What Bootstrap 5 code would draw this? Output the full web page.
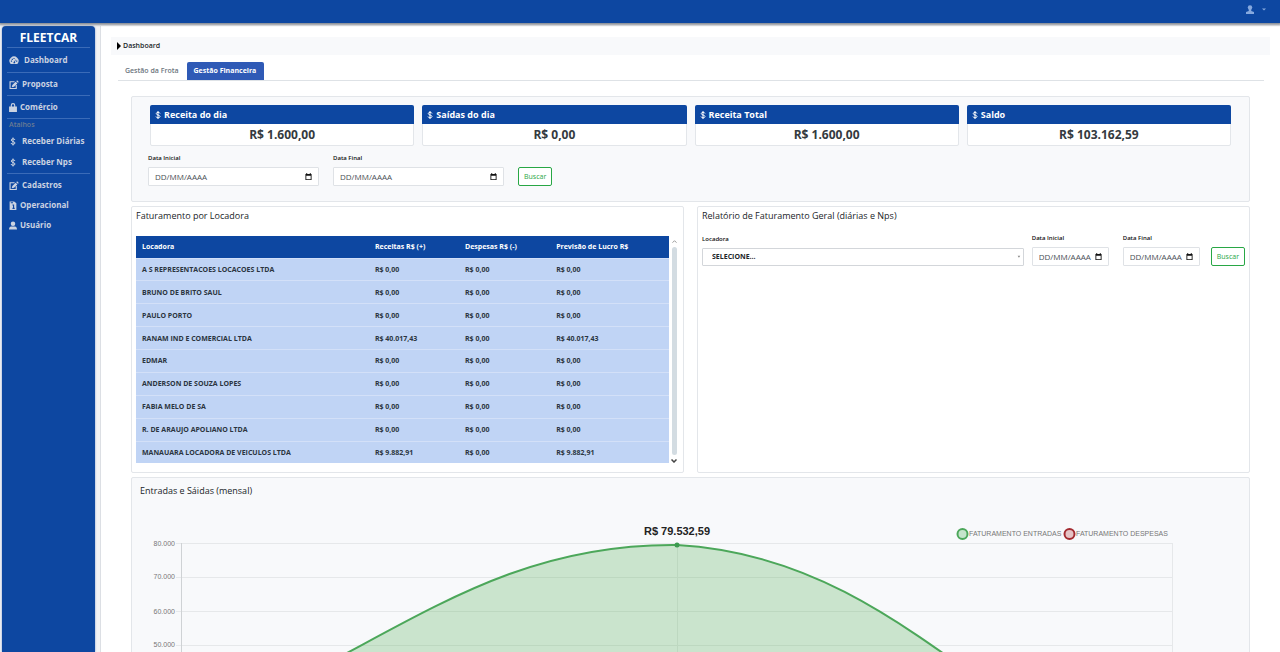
<!DOCTYPE html>
<html lang="pt-BR">
<head>
<meta charset="utf-8">
<meta name="viewport" content="width=device-width, initial-scale=1">
<title>Fleetcar - Dashboard</title>
<link href="https://cdn.jsdelivr.net/npm/bootstrap@5.3.0/dist/css/bootstrap.min.css" rel="stylesheet">
<style>
:root { --blue: #0d47a1; --soft: #f8f9fb; --line: #e3e6ea; }
body { font-family: "Open Sans", "Noto Sans", sans-serif; font-size: 8px; line-height: 12px; color: #212529; background: #f1f2f4; }
.topbar { height: 23px; background: var(--blue); box-shadow: 0 1px 2px 1px #8b8f96; z-index: 2; padding: 0 14px 5px 0; }
.user-btn { color: #86a9de; line-height: 0; }
.side { width: 93px; margin: 3px 5px 0 2px; padding: 4px 5px; background: var(--blue); border-radius: 4px 4px 0 0; box-shadow: 0 0 2px #6f8fc4; }
.brand-name { font-size: 12px; line-height: 16px; }
.side a { color: #cbd3e1; font-size: 8px; font-weight: 700; text-decoration: none; display: flex; align-items: center; gap: 3px; padding-left: 2px; height: 20px; }
.side a svg { width: 10px; height: 9px; flex: none; }
.side a svg.slim { width: 8px; }
.side a.shortcut svg { width: 8px; height: 9px; }
.side hr { margin: 1px 0; color: #7fa3dc; opacity: .4; }
.side .shortcut { gap: 5px; }
.side .tall { height: 22px; gap: 5px; }
.side small { color: #6b7c93; font-size: 7px; line-height: 10px; padding-left: 2px; font-weight: 600; }
.page-area { background: #fff; border-left: 1px solid #dcdfe4; padding: 11px 10px 0; margin-top: 3px; min-width: 0; }
.crumb-bar { background: var(--soft); height: 18px; padding-left: 6px; font-weight: 600; font-size: 7px; gap: 2px; }
.tabs-line { margin: 7px 6px 15px 7px; border-bottom: 1px solid #dee2e6; }
.tabs-line .nav-link { font-size: 7px; font-weight: 600; line-height: 18px; padding: 0 8px 0 7px; color: #6c757d; border: 0; border-radius: 2px 2px 0 0; }
.tabs-line .nav-link.active { background: #2f5ab6; color: #fff; font-weight: 700; }
.panels { margin: 0 20px; }
.panel { border: 1px solid var(--line); border-radius: 2px; }
.panel-soft { background: var(--soft); }
.stats { display: grid; grid-template-columns: repeat(4, 1fr); gap: 8px; padding: 8px 18px 0; }
.stat { border: 1px solid var(--line); border-radius: 2px; background: #fff; }
.stat h2 { font-size: 9px; line-height: 19px; font-weight: 700; margin: -1px -1px 0; padding: 0 4px; color: #fff; background: var(--blue); border-radius: 2px 2px 0 0; display: flex; align-items: center; gap: 2px; }
.stat p { font-size: 12px; line-height: 21px; font-weight: 700; color: #343a40; margin: 0; text-align: center; }
.search-row { padding: 7px 16px 15px; gap: 14px; }
.search-row .field { width: 171px; }
.lbl { font-size: 6px; line-height: 10px; font-weight: 600; display: block; margin-bottom: 4px; color: #111; }
.field { position: relative; }
.field input, .pick { width: 100%; height: 19px; border: 1px solid #dfe2e6; border-radius: 1px; padding: 0 6px; font-size: 8px; background: #fff; color: #212529; }
.field input::placeholder { color: #4a4f55; }
.field svg { position: absolute; right: 7px; bottom: 6px; width: 7px; height: 7px; }
.pick { height: 18px; padding: 0 9px; font-size: 7px; font-weight: 700; appearance: none; border-color: #d3d6da; }
.btn-find { height: 19px; padding: 0 5px; font-size: 7px; line-height: 17px; color: #28a745; border: 1px solid #28a745; border-radius: 2px; background: #fff; }
.ttl { font-size: 9px; line-height: 12px; font-weight: 500; margin: 0; }
.duo { display: grid; grid-template-columns: 1fr 1fr; gap: 13px; margin: 4px 0; }
.box { padding: 3px 4px 9px; }
.report-row { padding-top: 11px; }
.report-row .field-date { width: 77px; margin-right: 14px; }
.table-wrap { margin-top: 14px; }
.grid-table { height: 227px; margin: 0; font-size: 7px; line-height: 11px; table-layout: fixed; }
.grid-table th, .grid-table td { padding: 0 6px; border: 0; vertical-align: middle; white-space: nowrap; font-weight: 700; }
.grid-table thead th { background: var(--blue); color: #fff; height: 22px; }
.grid-table tbody td { background: #c0d4f5; border-top: 1px solid #d3e0f8; color: #2b3440; }
.scroller { width: 10px; }
.thumb { flex: 1; width: 5px; border-radius: 3px; background: #d3dce2; }
.chart-svg { display: block; width: 100%; height: auto; font-family: "Liberation Sans", Arial, sans-serif; }
</style>
</head>
<body class="vh-100 overflow-hidden d-flex flex-column">
<svg class="d-none">
  <symbol id="cal" viewBox="0 0 16 16"><path fill="#111" d="M3 0h2v2h6V0h2v2h2v14H1V2h2zM3 6v8h10V6z"/></symbol>
  <symbol id="dollar" viewBox="0 0 16 16"><path fill="none" stroke="currentColor" stroke-width="2" d="M8 0v16M12 5C11.500 1.800 4.500 1.800 4.500 5.200S12 7.500 12 11 4.500 14.500 4 11"/></symbol>
  <symbol id="edit" viewBox="0 0 16 16"><path fill="none" stroke="currentColor" stroke-width="2" d="M9 3H1v12h11V9"/><path fill="currentColor" d="M5 9l6-6 3 3-6 6-4 1zM12 2l1.500-1.500 3 3L15 5z"/></symbol>
</svg>

<header class="topbar flex-shrink-0 d-flex justify-content-end align-items-center position-relative">
  <button class="btn p-0 border-0 user-btn d-flex align-items-center gap-2" aria-label="Conta do usuário">
    <svg width="8" height="9" viewBox="0 0 16 18" fill="currentColor"><circle cx="8" cy="5" r="4.500"/><path d="M5.500 8h5v4l5.500 2v4H0v-4l5.500-2z"/></svg>
    <svg width="4" height="3" viewBox="0 0 8 6" fill="currentColor"><path d="M0 1h8L4 5z"/></svg>
  </button>
</header>

<div class="d-flex flex-grow-1 overflow-hidden">
  <nav class="side flex-shrink-0">
    <div class="brand-name text-white fw-bold text-center">FLEETCAR</div>
    <hr>
    <a href="#" class="tall"><svg viewBox="0 0 16 16" fill="currentColor"><path fill-rule="evenodd" d="M2 14A8 8 0 1 1 14 14zM7 11.500a1.500 1.500 0 1 0 2.500-1L12 5l-4 5zM7 3.500h2v2H7zM2.500 8h2v2h-2zM11.800 8h2v2h-2zM4 5h2v2H4z"/></svg>Dashboard</a>
    <hr>
    <a href="#"><svg><use href="#edit"/></svg>Proposta</a>
    <hr>
    <a href="#"><svg class="slim" viewBox="0 0 14 16" fill="currentColor"><path fill-rule="evenodd" d="M0 6h3V4a4 4 0 0 1 8 0v2h3v10H0zM5 6h4V4a2 2 0 0 0-4 0z"/></svg>Comércio</a>
    <hr>
    <small class="d-block">Atalhos</small>
    <a href="#" class="shortcut tall"><svg><use href="#dollar"/></svg>Receber Diárias</a>
    <a href="#" class="shortcut"><svg><use href="#dollar"/></svg>Receber Nps</a>
    <hr>
    <a href="#"><svg><use href="#edit"/></svg>Cadastros</a>
    <a href="#"><svg class="slim" viewBox="2 0 12 16" fill="currentColor"><path fill-rule="evenodd" d="M2 1h8l4 3v12H2zM7 6v2h1v4H7v2h4v-2h-1V6zM4 2v2h4V2z"/></svg>Operacional</a>
    <a href="#"><svg class="slim" viewBox="0 0 16 16" fill="currentColor"><circle cx="8" cy="4.500" r="4.500"/><path d="M0 16c0-4 2-6 4-6h8c2 0 4 2 4 6z"/></svg>Usuário</a>
  </nav>

  <main class="page-area flex-grow-1 overflow-hidden">
    <div class="crumb-bar d-flex align-items-center"><svg width="4" height="8" viewBox="0 0 4 8"><path d="M0 0l4 4L0 8z"/></svg>Dashboard</div>
    <ul class="nav tabs-line">
      <li class="nav-item"><a class="nav-link" href="#">Gestão da Frota</a></li>
      <li class="nav-item"><a class="nav-link active" href="#">Gestão Financeira</a></li>
    </ul>

    <div class="panels">
      <section class="panel panel-soft">
        <div class="stats">
          <div class="stat"><h2><svg width="8" height="10"><use href="#dollar"/></svg>Receita do dia</h2><p>R$ 1.600,00</p></div>
          <div class="stat"><h2><svg width="8" height="10"><use href="#dollar"/></svg>Saídas do dia</h2><p>R$ 0,00</p></div>
          <div class="stat"><h2><svg width="8" height="10"><use href="#dollar"/></svg>Receita Total</h2><p>R$ 1.600,00</p></div>
          <div class="stat"><h2><svg width="8" height="10"><use href="#dollar"/></svg>Saldo</h2><p>R$ 103.162,59</p></div>
        </div>
        <form class="search-row d-flex align-items-end">
          <div class="field"><label class="lbl" for="d1">Data Inicial</label><input id="d1" type="text" placeholder="DD/MM/AAAA"><svg><use href="#cal"/></svg></div>
          <div class="field"><label class="lbl" for="d2">Data Final</label><input id="d2" type="text" placeholder="DD/MM/AAAA"><svg><use href="#cal"/></svg></div>
          <button class="btn-find" type="button">Buscar</button>
        </form>
      </section>

      <div class="duo">
        <section class="panel box bg-white">
          <h3 class="ttl">Faturamento por Locadora</h3>
          <div class="table-wrap d-flex">
            <table class="table grid-table flex-grow-1">
              <colgroup><col style="width:43.700%"><col style="width:16.900%"><col style="width:17.100%"><col style="width:22.300%"></colgroup>
              <thead><tr><th>Locadora</th><th>Receitas R$ (+)</th><th>Despesas R$ (-)</th><th>Previsão de Lucro R$</th></tr></thead>
              <tbody>
                <tr><td>A S REPRESENTACOES LOCACOES LTDA</td><td>R$ 0,00</td><td>R$ 0,00</td><td>R$ 0,00</td></tr>
                <tr><td>BRUNO DE BRITO SAUL</td><td>R$ 0,00</td><td>R$ 0,00</td><td>R$ 0,00</td></tr>
                <tr><td>PAULO PORTO</td><td>R$ 0,00</td><td>R$ 0,00</td><td>R$ 0,00</td></tr>
                <tr><td>RANAM IND E COMERCIAL LTDA</td><td>R$ 40.017,43</td><td>R$ 0,00</td><td>R$ 40.017,43</td></tr>
                <tr><td>EDMAR</td><td>R$ 0,00</td><td>R$ 0,00</td><td>R$ 0,00</td></tr>
                <tr><td>ANDERSON DE SOUZA LOPES</td><td>R$ 0,00</td><td>R$ 0,00</td><td>R$ 0,00</td></tr>
                <tr><td>FABIA MELO DE SA</td><td>R$ 0,00</td><td>R$ 0,00</td><td>R$ 0,00</td></tr>
                <tr><td>R. DE ARAUJO APOLIANO LTDA</td><td>R$ 0,00</td><td>R$ 0,00</td><td>R$ 0,00</td></tr>
                <tr><td>MANAUARA LOCADORA DE VEICULOS LTDA</td><td>R$ 9.882,91</td><td>R$ 0,00</td><td>R$ 9.882,91</td></tr>
              </tbody>
            </table>
            <div class="scroller flex-shrink-0 d-flex flex-column align-items-center gap-1">
              <svg class="mt-1" width="5" height="3" viewBox="0 0 5 3"><path d="M.5 2.700l2-2 2 2" fill="none" stroke="#999"/></svg>
              <div class="thumb"></div>
              <svg width="6" height="4" viewBox="0 0 6 4"><path d="M.5.5L3 3 5.500.5" fill="none" stroke="#444" stroke-width="1.500"/></svg>
            </div>
          </div>
        </section>
        <section class="panel box bg-white">
          <h3 class="ttl">Relatório de Faturamento Geral (diárias e Nps)</h3>
          <form class="report-row d-flex align-items-end">
            <div class="flex-grow-1 field me-2"><label class="lbl" for="loc">Locadora</label><select id="loc" class="pick d-block"><option>SELECIONE...</option></select><svg viewBox="0 0 8 8" style="right:2px"><path fill="#888" d="M3 3h3L4.500 5.500z"/></svg></div>
            <div class="field field-date"><label class="lbl" for="d3">Data Inicial</label><input id="d3" type="text" placeholder="DD/MM/AAAA"><svg><use href="#cal"/></svg></div>
            <div class="field field-date" style="margin-right:11px"><label class="lbl" for="d4">Data Final</label><input id="d4" type="text" placeholder="DD/MM/AAAA"><svg><use href="#cal"/></svg></div>
            <button class="btn-find" type="button">Buscar</button>
          </form>
        </section>
      </div>

      <section class="panel panel-soft">
        <h3 class="ttl" style="padding:7px 8px 0">Entradas e Sáidas (mensal)</h3>
        <svg class="chart-svg" viewBox="132 497 1117 340">
          <g stroke="#e6e8ea" fill="none">
            <path d="M176 543.500H1173M176 577.500H1173M176 611.500H1173M176 645.500H1173M176 679.500H1173M176 713.500H1173M176 747.500H1173M176 781.500H1173M176 816.500H1173M677.500 543V816M1172.500 543V816"/>
            <path stroke="#cfd2d5" d="M181.500 543V816"/>
          </g>
          <path fill="#4caf50" fill-opacity=".27" d="M181 731C379 657 479 543 677 545C875 556 975 702 1173 806V816H181z"/>
          <path fill="none" stroke="#4ca75a" stroke-width="2" d="M181 731C379 657 479 543 677 545C875 556 975 702 1173 806"/>
          <circle cx="677" cy="545" r="2.500" fill="#3c9a50"/>
          <text x="677" y="535" text-anchor="middle" font-size="11" font-weight="700" fill="#222">R$ 79.532,59</text>
          <g font-size="7" fill="#777" text-anchor="end">
            <text x="175" y="546">80.000</text><text x="175" y="579">70.000</text><text x="175" y="614">60.000</text><text x="175" y="647">50.000</text>
          </g>
          <circle cx="962.500" cy="534" r="5" fill="#c5e4cb" stroke="#4ca75a" stroke-width="2"/>
          <circle cx="1069.500" cy="534" r="5" fill="#e5c3c6" stroke="#a32a30" stroke-width="2"/>
          <g font-size="7" fill="#777"><text x="969" y="536">FATURAMENTO ENTRADAS</text><text x="1076" y="536">FATURAMENTO DESPESAS</text></g>
        </svg>
      </section>
    </div>
  </main>
</div>
<script src="https://cdn.jsdelivr.net/npm/bootstrap@5.3.0/dist/js/bootstrap.bundle.min.js"></script>
</body>
</html>
